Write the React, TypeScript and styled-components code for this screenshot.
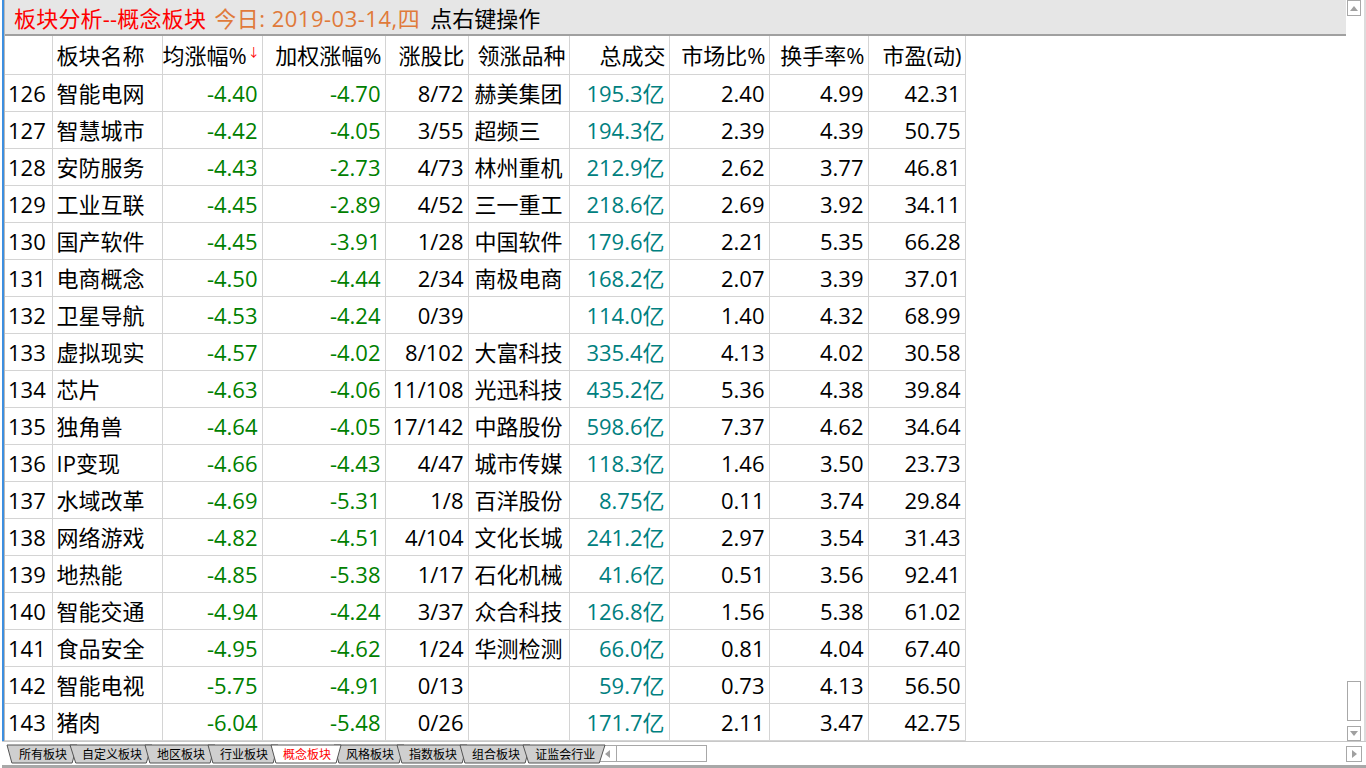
import React from 'react';
import styled, { createGlobalStyle } from 'styled-components';

// Light Gray (#E6E6E6) title bar
// Silver (#D4D4D4) grid lines
// Green (#008000) falling numbers
// Teal (#008080) turnover

const GlobalStyle = createGlobalStyle`
  html, body {
    margin: 0;
    padding: 0;
    background: #ffffff;
    overflow: hidden;
  }
  body {
    font-family: "Open Sans", "Noto Sans CJK SC", sans-serif;
  }
`;

const Window = styled.div`
  width: 1366px;
  height: 768px;
  display: flex;
  flex-direction: column;
  box-sizing: border-box;
  padding-left: 2px;
`;

const Body = styled.div`
  flex: 1;
  display: flex;
  border-left: 2px solid #3d8fe0;
  min-height: 0;
`;

const Content = styled.div`
  flex: 1;
  display: flex;
  flex-direction: column;
  border-left: 1px solid #b8b8b8;
  min-width: 0;
`;

const TitleBar = styled.div`
  height: 34px;
  background: #e6e6e6;
  border-bottom: 2px solid #a0a0a0;
  display: flex;
  align-items: center;
  padding-left: 9px;
  font-size: 22px;
  white-space: nowrap;
`;

const TitleText = styled.span<{ $color: string; $gap?: number; $spacing?: number }>`
  color: ${(p) => p.$color};
  margin-right: ${(p) => p.$gap ?? 9}px;
  letter-spacing: ${(p) => p.$spacing ?? 0}px;
`;

const Table = styled.table`
  border-collapse: collapse;
  table-layout: fixed;
  width: 960px;
  font-size: 22px;
  line-height: 1;
`;

const HeadCell = styled.th<{ $w: number; $left?: boolean }>`
  width: ${(p) => p.$w}px;
  height: 38px;
  box-sizing: border-box;
  padding: ${(p) => (p.$left ? '1px 0 0 4px' : '1px 3px 0 0')};
  text-align: ${(p) => (p.$left ? 'left' : 'right')};
  font-weight: normal;
  color: #000;
  border-right: 1px solid #d4d4d4;
  border-bottom: 1px solid #d4d4d4;
  white-space: nowrap;
`;

const SortArrow = styled.span`
  color: #ff0000;
  font-size: 12px;
  vertical-align: 7px;
  margin-left: 1px;
`;

const Row = styled.tr<{ $last?: boolean }>`
  height: 37px;
  td {
    border-top: 1px solid ${(p) => (p.$last ? '#2a2ab0' : '#d4d4d4')};
  }
  td:first-child {
    border-top-color: #d4d4d4;
  }
`;

const Cell = styled.td<{ $align?: 'left' | 'right'; $color?: string; $pad?: number }>`
  box-sizing: border-box;
  padding: ${(p) => (p.$align === 'left' ? `0 0 0 ${p.$pad ?? 5}px` : '0 4px 0 0')};
  text-align: ${(p) => p.$align ?? 'right'};
  color: ${(p) => p.$color ?? '#000'};
  border-right: 1px solid #d4d4d4;
  border-bottom: 1px solid #d4d4d4;
  white-space: nowrap;
  overflow: hidden;
`;

const TabStrip = styled.div`
  height: 27px;
  display: flex;
  align-items: flex-start;
  border-top: 1px solid #c8c8c8;
  border-bottom: 3px solid #a8a8a8;
  box-sizing: border-box;
  padding: 3px 0 0 5px;
  background: #ffffff;
`;

const Tabs = styled.div`
  display: flex;
  height: 18px;
`;

const Tab = styled.div<{ $active?: boolean; $z: number }>`
  position: relative;
  height: 18px;
  padding: 0 10px 0 12px;
  margin-right: -7px;
  font-family: "Noto Sans CJK SC", sans-serif;
  font-size: 12px;
  line-height: 18px;
  color: ${(p) => (p.$active ? '#ff0000' : '#000')};
  z-index: ${(p) => p.$z};
  white-space: nowrap;
  span {
    position: relative;
  }
`;

const TabShape = styled.svg`
  position: absolute;
  inset: 0;
  width: 100%;
  height: 100%;
  overflow: visible;
`;

const HScroll = styled.div`
  display: flex;
  margin-left: 0;
  height: 17px;
  border: 1px solid #a8a8a8;
  width: 109px;
  box-sizing: border-box;
`;

const ScrollBtn = styled.div`
  width: 18px;
  height: 100%;
  box-sizing: border-box;
  border-right: 1px solid #a8a8a8;
  display: flex;
  align-items: center;
  justify-content: center;
`;

const VScroll = styled.div`
  width: 17px;
  display: flex;
  flex-direction: column;
  align-items: flex-start;
  border-right: 2px solid #dcdcdc;
  padding-left: 1px;
`;

const VButton = styled.div<{ $h: number }>`
  width: 14px;
  height: ${(p) => p.$h}px;
  box-sizing: border-box;
  border: 1px solid #a8a8a8;
  display: flex;
  align-items: center;
  justify-content: center;
`;

const VTrack = styled.div`
  flex: 1;
  display: flex;
  flex-direction: column;
  justify-content: flex-end;
  padding-bottom: 5px;
`;

const CornerBtn = styled.div`
  margin: 1px 0 0 -3px;
  width: 16px;
  height: 16px;
  box-sizing: border-box;
  border: 1px solid #a8a8a8;
  display: flex;
  align-items: center;
  justify-content: center;
`;

const Spacer = styled.div<{ $w?: number }>`
  flex: ${(p) => (p.$w ? `0 0 ${p.$w}px` : '1')};
`;

const Tri = ({ dir }: { dir: 'up' | 'down' | 'left' | 'right' }) => {
  const pts = {
    up: '0,5 4,0 8,5',
    down: '0,0 8,0 4,5',
    left: '5,0 5,8 0,4',
    right: '0,0 0,8 5,4',
  }[dir];
  const horiz = dir === 'left' || dir === 'right';
  return (
    <svg width={horiz ? 5 : 8} height={horiz ? 8 : 5}>
      <polygon points={pts} fill="#a0a0a0" />
    </svg>
  );
};

const cols = [
  { title: '', w: 47 },
  { title: '板块名称', w: 110, left: true },
  { title: '均涨幅%', w: 100, arrow: true },
  { title: '加权涨幅%', w: 123 },
  { title: '涨股比', w: 83 },
  { title: '领涨品种', w: 101 },
  { title: '总成交', w: 100 },
  { title: '市场比%', w: 100 },
  { title: '换手率%', w: 99 },
  { title: '市盈(动)', w: 97 },
];

const rows: string[][] = [
  ['126', '智能电网', '-4.40', '-4.70', '8/72', '赫美集团', '195.3亿', '2.40', '4.99', '42.31'],
  ['127', '智慧城市', '-4.42', '-4.05', '3/55', '超频三', '194.3亿', '2.39', '4.39', '50.75'],
  ['128', '安防服务', '-4.43', '-2.73', '4/73', '林州重机', '212.9亿', '2.62', '3.77', '46.81'],
  ['129', '工业互联', '-4.45', '-2.89', '4/52', '三一重工', '218.6亿', '2.69', '3.92', '34.11'],
  ['130', '国产软件', '-4.45', '-3.91', '1/28', '中国软件', '179.6亿', '2.21', '5.35', '66.28'],
  ['131', '电商概念', '-4.50', '-4.44', '2/34', '南极电商', '168.2亿', '2.07', '3.39', '37.01'],
  ['132', '卫星导航', '-4.53', '-4.24', '0/39', '', '114.0亿', '1.40', '4.32', '68.99'],
  ['133', '虚拟现实', '-4.57', '-4.02', '8/102', '大富科技', '335.4亿', '4.13', '4.02', '30.58'],
  ['134', '芯片', '-4.63', '-4.06', '11/108', '光迅科技', '435.2亿', '5.36', '4.38', '39.84'],
  ['135', '独角兽', '-4.64', '-4.05', '17/142', '中路股份', '598.6亿', '7.37', '4.62', '34.64'],
  ['136', 'IP变现', '-4.66', '-4.43', '4/47', '城市传媒', '118.3亿', '1.46', '3.50', '23.73'],
  ['137', '水域改革', '-4.69', '-5.31', '1/8', '百洋股份', '8.75亿', '0.11', '3.74', '29.84'],
  ['138', '网络游戏', '-4.82', '-4.51', '4/104', '文化长城', '241.2亿', '2.97', '3.54', '31.43'],
  ['139', '地热能', '-4.85', '-5.38', '1/17', '石化机械', '41.6亿', '0.51', '3.56', '92.41'],
  ['140', '智能交通', '-4.94', '-4.24', '3/37', '众合科技', '126.8亿', '1.56', '5.38', '61.02'],
  ['141', '食品安全', '-4.95', '-4.62', '1/24', '华测检测', '66.0亿', '0.81', '4.04', '67.40'],
  ['142', '智能电视', '-5.75', '-4.91', '0/13', '', '59.7亿', '0.73', '4.13', '56.50'],
  ['143', '猪肉', '-6.04', '-5.48', '0/26', '', '171.7亿', '2.11', '3.47', '42.75'],
];

const tabs = ['所有板块', '自定义板块', '地区板块', '行业板块', '概念板块', '风格板块', '指数板块', '组合板块', '证监会行业'];
const activeTab = 4;

const cellProps = (i: number) => {
  if (i === 0) return { $align: 'left' as const, $pad: 3 };
  if (i === 1) return { $align: 'left' as const, $pad: 4 };
  if (i === 2 || i === 3) return { $color: '#008000' };
  if (i === 5) return { $align: 'left' as const, $pad: 6 };
  if (i === 6) return { $color: '#008080' };
  return {};
};

const App = () => {
  return (
    <Window>
      <GlobalStyle />
      <Body>
        <Content>
          <TitleBar>
            <TitleText $color="#ff0000" $gap={8} $spacing={0.2}>板块分析--概念板块</TitleText>
            <TitleText $color="#e07a3a" $gap={10} $spacing={0.5}>今日: 2019-03-14,四</TitleText>
            <TitleText $color="#000">点右键操作</TitleText>
          </TitleBar>
          <Table>
            <thead>
              <tr>
                {cols.map((c, i) => (
                  <HeadCell key={i} $w={c.w} $left={c.left}>
                    {c.title}
                    {c.arrow && <SortArrow>↓</SortArrow>}
                  </HeadCell>
                ))}
              </tr>
            </thead>
            <tbody>
              {rows.map((r, ri) => (
                <Row key={r[0]} $last={ri === rows.length - 1}>
                  {r.map((v, i) => (
                    <Cell key={i} {...cellProps(i)}>
                      {v}
                    </Cell>
                  ))}
                </Row>
              ))}
            </tbody>
          </Table>
        </Content>
        <VScroll>
          <VButton $h={16}>
            <Tri dir="up" />
          </VButton>
          <VTrack>
            <VButton $h={40} />
          </VTrack>
          <VButton $h={15}>
            <Tri dir="down" />
          </VButton>
        </VScroll>
      </Body>
      <TabStrip>
        <Tabs>
          {tabs.map((t, i) => (
            <Tab key={t} $active={i === activeTab} $z={i === activeTab ? 50 : i + 1}>
              <TabShape preserveAspectRatio="none" viewBox="0 0 100 18">
                <polygon
                  points="0,0 100,0 93,18 7,18"
                  fill={i === activeTab ? '#ffffff' : '#cfcfcf'}
                  stroke="#555"
                  strokeWidth="1"
                  vectorEffect="non-scaling-stroke"
                />
              </TabShape>
              <span>{t}</span>
            </Tab>
          ))}
        </Tabs>
        <HScroll>
          <ScrollBtn>
            <Tri dir="left" />
          </ScrollBtn>
        </HScroll>
        <Spacer />
        <CornerBtn>
          <Tri dir="right" />
        </CornerBtn>
        <Spacer $w={4} />
      </TabStrip>
    </Window>
  );
};

export default App;
